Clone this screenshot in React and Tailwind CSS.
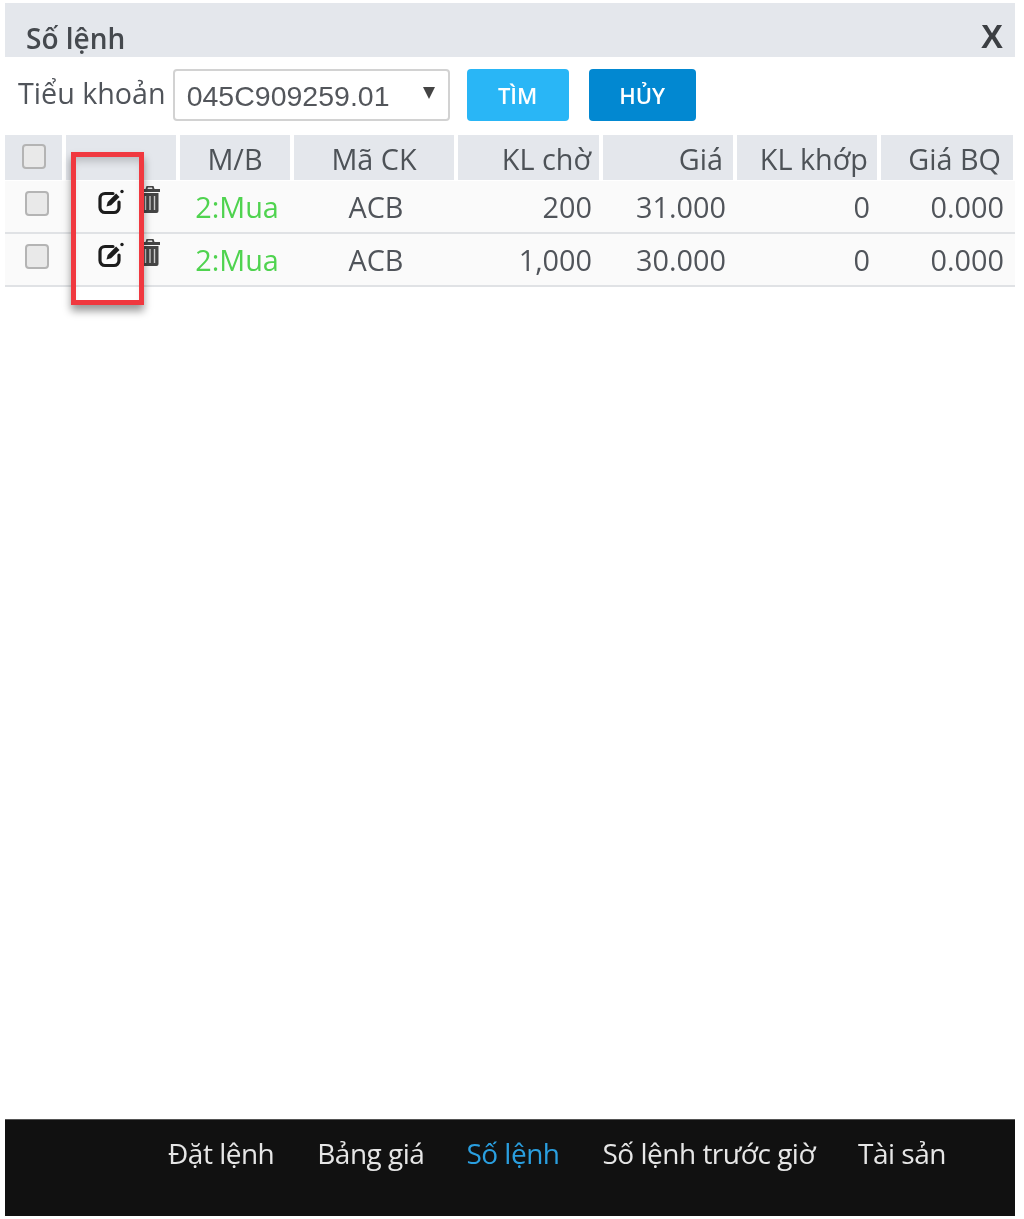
const COLS = "grid grid-cols-[57px_110px_110px_160px_141px_130px_140px_132px] gap-x-[4px]";
const F = { fontFamily: '"Open Sans", "Noto Sans", sans-serif' };

function Box({ className = "" }) {
  return <span className={"block w-[24px] h-[25px] rounded-[4px] border-2 border-[#b4b4b4] bg-[#e9e9e9] " + className} />;
}

function EditIcon() {
  return (
    <svg width="26" height="26" viewBox="0 0 26 26" fill="none" className="block">
      <path d="M15 4.5H7A5 5 0 0 0 2 9.5v9A5 5 0 0 0 7 23.5h9a5 5 0 0 0 5-5V13" stroke="#1c1c1c" strokeWidth="3.2" strokeLinecap="round" />
      <path d="M8.5 17.5l1.2-4.6 8.4-8.4 3.4 3.4-8.4 8.4z" fill="#1c1c1c" />
      <circle cx="24" cy="2.5" r="1.7" fill="#1c1c1c" />
    </svg>
  );
}

function TrashIcon() {
  return (
    <svg width="20" height="27" viewBox="0 0 20 27" className="block">
      <path d="M6.5 0h7l1 3H20v3H0V3h5.5z" fill="#454545" />
      <path d="M8 1.5h4l.5 1.5h-5z" fill="#e8e8e8" />
      <path d="M1.5 7h17v18a2 2 0 0 1-2 2h-13a2 2 0 0 1-2-2z" fill="#454545" />
      <path d="M5.5 10v14M10 10v14M14.5 10v14" stroke="#c9c9c9" strokeWidth="1.4" />
    </svg>
  );
}

function Head({ children, align = "text-center", pr = "" }) {
  return <div className={"bg-[#e4e7ec] h-[45px] flex items-center justify-center pt-[2px] text-[28.8px] text-[#4d5257] " + pr}><span className={"w-full whitespace-nowrap " + align}>{children}</span></div>;
}

function Row({ kl, gia }) {
  return (
    <div className={COLS + " h-[53px] bg-[#fafafa] border-b-2 border-[#e0e2e5] text-[28.8px] text-[#50545a] items-center"}>
      <div className="pl-[20px] pb-[6px]"><Box /></div>
      <div className="flex pl-[32px] pb-[10px]">
        <EditIcon />
        <span className="ml-[16px] -mt-[3px]"><TrashIcon /></span>
      </div>
      <div className="text-[#4fd34f] text-center pl-[4px]">2:Mua</div>
      <div className="text-center pl-[4px]">ACB</div>
      <div className="text-right pr-[7px]">{kl}</div>
      <div className="text-right pr-[7px]">{gia}</div>
      <div className="text-right pr-[7px]">0</div>
      <div className="text-right pr-[9px]">0.000</div>
    </div>
  );
}

export default function App() {
  return (
    <div style={F} className="relative w-[1024px] h-[1219px] bg-white overflow-hidden flex flex-col pl-[5px] pr-[9px] pt-[3px] pb-[3px] blur-[0.7px]">
      <div className="h-[54px] bg-[#e4e7ec] shrink-0 flex items-end justify-between pl-[21px] pr-[12px] pb-[1px]">
        <span className="text-[28px] leading-[36px] text-[#45494e] font-semibold">Số lệnh</span>
        <span className="text-[33px] leading-[38px] font-bold text-[#3c3f43]" style={{ fontFamily: '"Liberation Sans", sans-serif' }}>X</span>
      </div>
      <div className="h-[76px] shrink-0 flex items-start pt-[12px] pl-[13px]">
        <span className="text-[28.7px] leading-[48px] text-[#50545a] whitespace-nowrap">Tiểu khoản</span>
        <div className="ml-[7px] w-[277px] h-[52px] border-2 border-[#d2d2d2] rounded-[4px] flex items-center pl-[12px] pr-[13px] justify-between text-[#53565b] text-[28.5px]" style={{ fontFamily: '"Liberation Sans", sans-serif' }}>
          <span className="pt-[2px]">045C909259.01</span>
          <span className="w-0 h-0 border-l-[6px] border-r-[6px] border-t-[12px] border-l-transparent border-r-transparent border-t-[#444] mb-[4px]" />
        </div>
        <button className="ml-[17px] w-[102px] h-[52px] rounded-[4px] bg-[#29b6f6] text-white text-[22px] font-semibold">TÌM</button>
        <button className="ml-[20px] w-[107px] h-[52px] rounded-[4px] bg-[#0288d1] text-white text-[22px] font-semibold">HỦY</button>
      </div>
      <div className={COLS + " shrink-0 mt-[2px] w-[1010px]"}>
        <div className="bg-[#e4e7ec] h-[45px] pl-[17px] pt-[9px]"><Box /></div>
        <div className="bg-[#e4e7ec] h-[45px]" />
        <Head>M/B</Head>
        <Head>Mã CK</Head>
        <Head align="text-right" pr="pr-[8px]">KL chờ</Head>
        <Head align="text-right" pr="pr-[10px]">Giá</Head>
        <Head align="text-right" pr="pr-[9px]">KL khớp</Head>
        <Head align="text-right" pr="pr-[12px]">Giá BQ</Head>
      </div>
      <div className="w-[1010px] shrink-0 mt-[1px]">
        <Row kl="200" gia="31.000" />
        <Row kl="1,000" gia="30.000" />
      </div>
      <div className="flex-1" />
      <div className="h-[97px] shrink-0 bg-[#111111] border-t border-[#555] flex items-start pl-[163px] pt-[12px] text-[28px] text-[#e6e6e6] tracking-[-0.5px] w-[1010px]">
        <span>Đặt lệnh</span>
        <span className="ml-[43px]">Bảng giá</span>
        <span className="ml-[42px] text-[#2a9fe0]">Số lệnh</span>
        <span className="ml-[43px]">Số lệnh trước giờ</span>
        <span className="ml-[43px]">Tài sản</span>
      </div>
      <div className="absolute left-[71px] top-[152px] w-[73px] h-[153px] border-[5px] border-[#f0383f] shadow-[0_6px_8px_rgba(0,0,0,0.4),inset_0_8px_8px_-4px_rgba(0,0,0,0.2)]" />
    </div>
  );
}
